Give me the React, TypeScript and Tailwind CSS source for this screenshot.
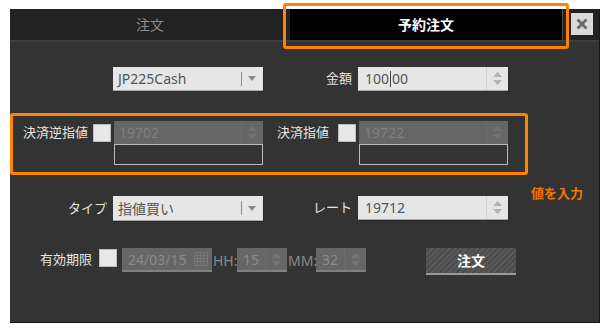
import React from "react";

const FONT = "font-['Noto_Sans','Noto_Sans_CJK_JP',sans-serif]";

function Spinner({ color, sep }: { color: string; sep: string }) {
  return (
    <div className={`flex h-full w-[22px] flex-col items-center justify-center gap-[3px] border-l ${sep}`}>
      <svg width="9" height="5" viewBox="0 0 9 5">
        <path d="M0 5 L4.5 0 L9 5Z" fill={color} />
      </svg>
      <svg width="9" height="5" viewBox="0 0 9 5">
        <path d="M0 0 L4.5 5 L9 0Z" fill={color} />
      </svg>
    </div>
  );
}

function Select({ text, h }: { text: string; h: string }) {
  return (
    <div className={`flex w-[150px] ${h} items-center bg-[#e6e6e6] border-b border-[#a9a9a9] shadow-[1px_1px_0_#2a2a2a]`}>
      <span className="flex-1 pl-[5px] text-[14px] text-[#555]">{text}</span>
      <span className="h-[14px] w-[1px] bg-[#8a8a8a]" />
      <svg className="ml-[6px] mr-[7px]" width="8" height="5" viewBox="0 0 8 5">
        <path d="M0 0 L4 5 L8 0Z" fill="#8a8a8a" />
      </svg>
    </div>
  );
}

function LightInput({ children, h }: { children: React.ReactNode; h: string }) {
  return (
    <div className={`flex w-[150px] ${h} items-center bg-[#e6e6e6] border-b border-[#a9a9a9] shadow-[1px_1px_0_#2a2a2a]`}>
      <div className="flex flex-1 items-center pl-[7px] text-[14px] text-[#555]">{children}</div>
      <Spinner color="#b3b3b3" sep="border-[#d2d2d2]" />
    </div>
  );
}

function DisabledStack({ value }: { value: string }) {
  return (
    <div className="flex w-[149px] flex-col">
      <div className="flex h-[23px] items-center bg-[#666]">
        <span className="flex-1 pl-[5px] text-[14px] text-[#7f7f7f]">{value}</span>
        <Spinner color="#727272" sep="border-[#6e6e6e]" />
      </div>
      <div className="h-[21px] border border-[#b8b8b8] bg-[#333]" />
    </div>
  );
}

function Check({ mt }: { mt: string }) {
  return <div className={`h-[18px] w-[18px] ${mt} border border-[#bdbdbd] bg-[#e8e8e8]`} />;
}

function SmallDisabled({ value, w }: { value: string; w: string }) {
  return (
    <div className={`flex ${w} h-[24px] items-center bg-[#666] border-b-2 border-[#808080]`}>
      <span className="flex-1 pl-[6px] text-[14px] text-[#8a8a8a]">{value}</span>
      <Spinner color="#767676" sep="border-[#6c6c6c]" />
    </div>
  );
}

export default function App() {
  return (
    <div className={`relative h-[331px] w-[604px] bg-white pl-[10px] pt-[9px] ${FONT}`}>
      <div className="h-[314px] w-[590px] border-b border-r border-[#161616] bg-[#333]">
        {/* tab bar */}
        <div className="flex h-[31px] bg-[#222]">
          <div className="flex w-[280px] items-center justify-center text-[14px] text-[#8c8c8c]">注文</div>
          <div className="flex w-[273px] items-center justify-center border-r border-[#4a4a4a] bg-black text-[14px] font-bold text-white">
            予約注文
          </div>
          <div className="ml-[8px] mt-[4px] flex h-[22px] w-[22px] items-center justify-center bg-[#d9d9d9]">
            <svg width="12" height="12" viewBox="0 0 12 12">
              <path d="M1.5 1.5 L10.5 10.5 M10.5 1.5 L1.5 10.5" stroke="#6a6a6a" strokeWidth="3" />
            </svg>
          </div>
        </div>
        <div className="h-[2px] bg-[#3f3f3f]" />

        {/* body */}
        <div className="pt-[25px] text-[13px] text-[#e4e4e4]">
          {/* row 1 */}
          <div className="flex h-[24px] items-center">
            <div className="w-[103px]" />
            <Select text="JP225Cash" h="h-[24px]" />
            <div className="w-[95px] pr-[6px] text-right">金額</div>
            <LightInput h="h-[24px]">
              <span>100</span>
              <span className="mx-[1px] h-[16px] w-[1px] bg-[#444]" />
              <span>00</span>
            </LightInput>
          </div>

          {/* row 2 */}
          <div className="mt-[30px] flex items-start">
            <div className="flex h-[23px] w-[78px] items-center justify-end">決済逆指値</div>
            <div className="ml-[5px]">
              <Check mt="mt-[3px]" />
            </div>
            <div className="ml-[3px]">
              <DisabledStack value="19702" />
            </div>
            <div className="ml-[14px] flex h-[23px] w-[53px] items-center">決済指値</div>
            <div className="ml-[8px]">
              <Check mt="mt-[3px]" />
            </div>
            <div className="ml-[3px]">
              <DisabledStack value="19722" />
            </div>
          </div>

          {/* row 3 */}
          <div className="mt-[31px] flex h-[25px] items-start">
            <div className="flex h-[25px] w-[103px] items-center justify-end pr-[6px]">タイプ</div>
            <Select text="指値買い" h="h-[25px]" />
            <div className="flex h-[24px] w-[95px] items-center justify-end pr-[6px]">レート</div>
            <LightInput h="h-[24px]">
              <span>19712</span>
            </LightInput>
          </div>

          {/* row 4 */}
          <div className="mt-[27px] flex items-start">
            <div className="flex h-[24px] w-[82px] items-center justify-end">有効期限</div>
            <div className="ml-[7px]">
              <Check mt="mt-[1px]" />
            </div>
            <div className="ml-[5px] flex h-[24px] w-[90px] items-center bg-[#666] border-b-2 border-[#808080]">
              <span className="flex-1 pl-[6px] text-[14px] text-[#8a8a8a]">24/03/15</span>
              <svg className="mr-[4px]" width="14" height="14" viewBox="0 0 14 14">
                <path
                  d="M0.5 0.5 H13.5 V13.5 H0.5Z M0.5 3.5 H13.5 M0.5 6.5 H13.5 M0.5 9.5 H13.5 M3.5 0.5 V13.5 M6.5 0.5 V13.5 M9.5 0.5 V13.5"
                  stroke="#767676"
                  strokeWidth="1"
                  fill="none"
                />
              </svg>
            </div>
            <div className="flex h-[24px] w-[25px] items-center pl-[1px] text-[14px] text-[#8a8a8a]">HH:</div>
            <SmallDisabled value="15" w="w-[50px]" />
            <div className="flex h-[24px] w-[29px] items-center pl-[1px] text-[14px] text-[#8a8a8a]">MM:</div>
            <SmallDisabled value="32" w="w-[50px]" />
            <div className="ml-[60px] flex h-[27px] w-[90px] items-center justify-center border-b-2 border-[#9a9a9a] bg-[image:repeating-linear-gradient(135deg,#585858_0px,#585858_2px,#4b4b4b_2px,#4b4b4b_4px)] text-[14px] font-bold text-white">
              注文
            </div>
          </div>
        </div>
      </div>

      {/* annotations */}
      <div className="absolute left-[283px] top-[3px] h-[46px] w-[286px] rounded-[3px] border-[3px] border-[#ff8200]" />
      <div className="absolute left-[10px] top-[113px] h-[62px] w-[518px] rounded-[3px] border-[3px] border-[#ff8200]" />
      <div className="absolute left-[531px] top-[184px] text-[13px] font-bold text-[#f07800]">値を入力</div>
    </div>
  );
}
